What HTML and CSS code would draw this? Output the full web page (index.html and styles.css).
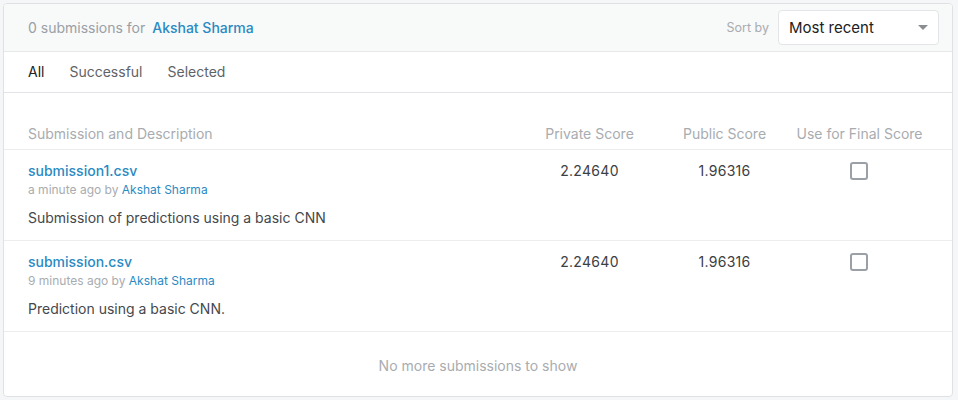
FILE: index.html
```html
<!DOCTYPE html>
<html>
<head>
<meta charset="utf-8">
<link rel="stylesheet" href="styles.css">
</head>
<body>
<div class="card">
  <div class="head">
    <div class="title">0 submissions for <a class="link strong">Akshat Sharma</a></div>
    <div class="sort">
      <span class="sort-label">Sort by</span>
      <div class="select"><span>Most recent</span><span class="caret"></span></div>
    </div>
  </div>
  <div class="tabs">
    <span class="tab active">All</span>
    <span class="tab">Successful</span>
    <span class="tab">Selected</span>
  </div>
  <div class="grid thead">
    <div>Submission and Description</div>
    <div class="c">Private Score</div>
    <div class="c">Public Score</div>
    <div class="c">Use for Final Score</div>
  </div>
  <div class="grid row">
    <div>
      <div class="name link">submission1.csv</div>
      <div class="meta">a minute ago by <a class="link">Akshat Sharma</a></div>
      <div class="desc">Submission of predictions using a basic CNN</div>
    </div>
    <div class="c score">2.24640</div>
    <div class="c score">1.96316</div>
    <div class="c"><span class="check"></span></div>
  </div>
  <div class="grid row">
    <div>
      <div class="name link">submission.csv</div>
      <div class="meta">9 minutes ago by <a class="link">Akshat Sharma</a></div>
      <div class="desc">Prediction using a basic CNN.</div>
    </div>
    <div class="c score">2.24640</div>
    <div class="c score">1.96316</div>
    <div class="c"><span class="check"></span></div>
  </div>
  <div class="foot">No more submissions to show</div>
</div>
</body>
</html>
```
FILE: styles.css
```css
html, body { margin: 0; padding: 0; }
body {
  background: #f5f6f7;
  font-family: Inter, "Noto Sans", sans-serif;
  font-size: 14px;
  line-height: 20px;
  color: #3c4043;
  padding: 3px 5px 0 3px;
}
.card {
  background: #fff;
  border: 1px solid #dfe2e5;
  border-radius: 4px;
  width: 950px;
  height: 394px;
  box-sizing: border-box;
  overflow: hidden;
}
.head {
  background: #f8f9f9;
  height: 47px;
  border-bottom: 1px solid #e6e8ea;
  display: flex;
  align-items: center;
  justify-content: space-between;
  padding: 0 13px 0 24px;
}
.title { color: #9aa0a6; }
.link { color: #2a8ac3; text-decoration: none; }
.strong { font-weight: 500; margin-left: 3px; }
.sort { display: flex; align-items: center; gap: 9px; }
.sort-label { color: #a8acb0; font-size: 12.5px; }
.select {
  width: 161px;
  height: 35px;
  box-sizing: border-box;
  background: #fff;
  border: 1px solid #e3e5e8;
  border-radius: 4px;
  display: flex;
  align-items: center;
  justify-content: space-between;
  padding: 0 10px 0 10px;
  font-size: 15px;
  color: #202124;
}
.caret {
  width: 0; height: 0;
  border-left: 5px solid transparent;
  border-right: 5px solid transparent;
  border-top: 5px solid #8a8e92;
}
.tabs {
  height: 40px;
  border-bottom: 1px solid #e1e3e6;
  display: flex;
  align-items: center;
  gap: 25px;
  padding-left: 24px;
}
.tab { color: #5f6368; }
.tab.active { color: #202124; }
.grid {
  display: grid;
  grid-template-columns: 1fr 135px 135px 135px;
  padding: 0 25px 0 24px;
}
.c { text-align: center; }
.thead {
  padding-top: 31px;
  padding-bottom: 5px;
  color: #a8acb0;
  border-bottom: 1px solid #ebedef;
}
.row {
  padding-top: 11px;
  padding-bottom: 12px;
  border-bottom: 1px solid #ebedef;
}
.name { font-weight: 500; }
.meta { font-size: 12px; line-height: 18px; color: #a8acb0; }
.desc { margin-top: 9px; color: #44484c; }
.score { color: #3c4043; letter-spacing: 0.3px; }
.check {
  display: inline-block;
  width: 18px; height: 18px;
  box-sizing: border-box;
  border: 2px solid #9aa0a6;
  border-radius: 3px;
  margin-top: 1px;
  margin-left: -2px;
}
.foot {
  text-align: center;
  padding-top: 24px;
  color: #a8acb0;
}
```
